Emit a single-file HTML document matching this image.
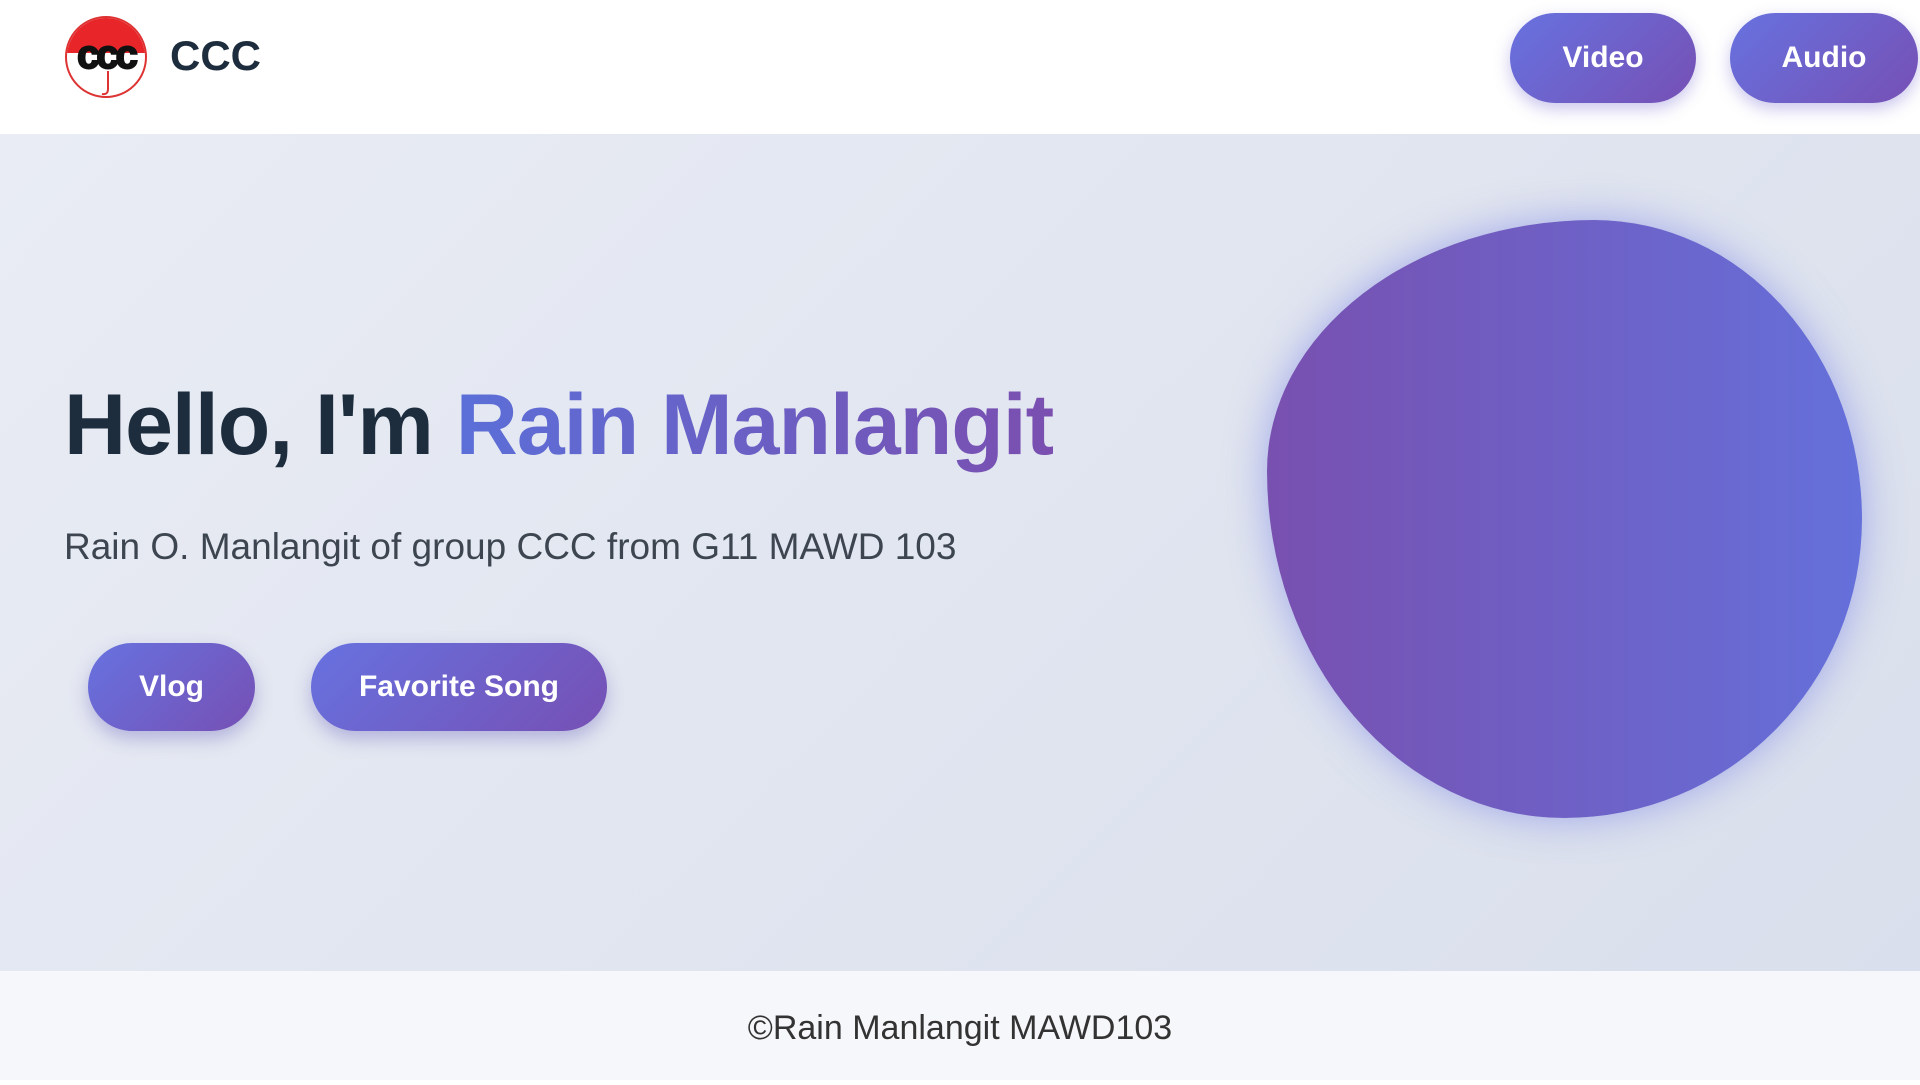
<!DOCTYPE html>
<html><head><style>
*{margin:0;padding:0;box-sizing:border-box}
body{width:1920px;height:1080px;overflow:hidden;font-family:"Liberation Sans",sans-serif;background:#fff}
header{position:absolute;top:0;left:0;width:1920px;height:134px;background:#fff}
.logo{position:absolute;left:64px;top:15px}
.brand{position:absolute;left:170px;top:32px;font-size:42px;font-weight:bold;color:#1e2d3d}
.nb{position:absolute;top:13px;height:90px;border-radius:45px;background:linear-gradient(135deg,#6772e0,#7650b4);color:#fff;font-size:30px;font-weight:bold;display:flex;align-items:center;justify-content:center;box-shadow:0 6px 16px rgba(100,90,200,.35)}
.hero{position:absolute;top:134px;left:0;width:1920px;height:837px;background:linear-gradient(135deg,#e9ecf4,#d9dfec);overflow:hidden}
h1{position:absolute;left:64px;top:376px;font-size:86px;color:#1e2d3d;white-space:nowrap;letter-spacing:-1px}
h1 span{background:linear-gradient(90deg,#5b6fd8,#7a4fb0);-webkit-background-clip:text;color:transparent}
.sub{position:absolute;left:64px;top:526px;font-size:37px;color:#3d4650}
.b{position:absolute;top:643px;height:88px;border-radius:44px;background:linear-gradient(135deg,#6772e0,#7650b4);color:#fff;font-size:30px;font-weight:bold;display:flex;align-items:center;justify-content:center;box-shadow:0 8px 18px rgba(90,80,180,.35)}
.blob{position:absolute;left:1267px;top:86px;width:595px;height:598px;border-radius:55% 45% 50% 50% / 42% 50% 50% 58%;background:linear-gradient(90deg,#7850b0,#6570da);box-shadow:0 0 40px rgba(100,110,230,.5)}
footer{position:absolute;top:971px;left:0;width:1920px;height:109px;background:#f6f7fa;text-align:center;font-size:34px;color:#333;line-height:114px}
</style></head><body>
<header>
<svg class="logo" width="84" height="84" viewBox="0 0 84 84">
<defs><clipPath id="c"><circle cx="42" cy="42" r="39"/></clipPath></defs>
<circle cx="42" cy="42" r="40" fill="#fff" stroke="#d33" stroke-width="2"/>
<rect x="0" y="0" width="84" height="38" fill="#e8262a" clip-path="url(#c)"/>
<text x="42" y="53" text-anchor="middle" font-family="Liberation Sans" font-weight="bold" font-size="40" fill="#111" stroke="#111" stroke-width="2" letter-spacing="-3">ccc</text>
<path d="M44 56 L44 74 Q44 80 38 79" fill="none" stroke="#d33" stroke-width="2"/>
</svg>
<div class="brand">CCC</div>
<div class="nb" style="left:1510px;width:186px">Video</div>
<div class="nb" style="left:1730px;width:188px">Audio</div>
</header>
<div class="hero">
<div class="blob"></div>
</div>
<h1>Hello, I'm <span>Rain Manlangit</span></h1>
<div class="sub">Rain O. Manlangit of group CCC from G11 MAWD 103</div>
<div class="b" style="left:88px;width:167px">Vlog</div>
<div class="b" style="left:311px;width:296px">Favorite Song</div>
<footer>©Rain Manlangit MAWD103</footer>
</body></html>
